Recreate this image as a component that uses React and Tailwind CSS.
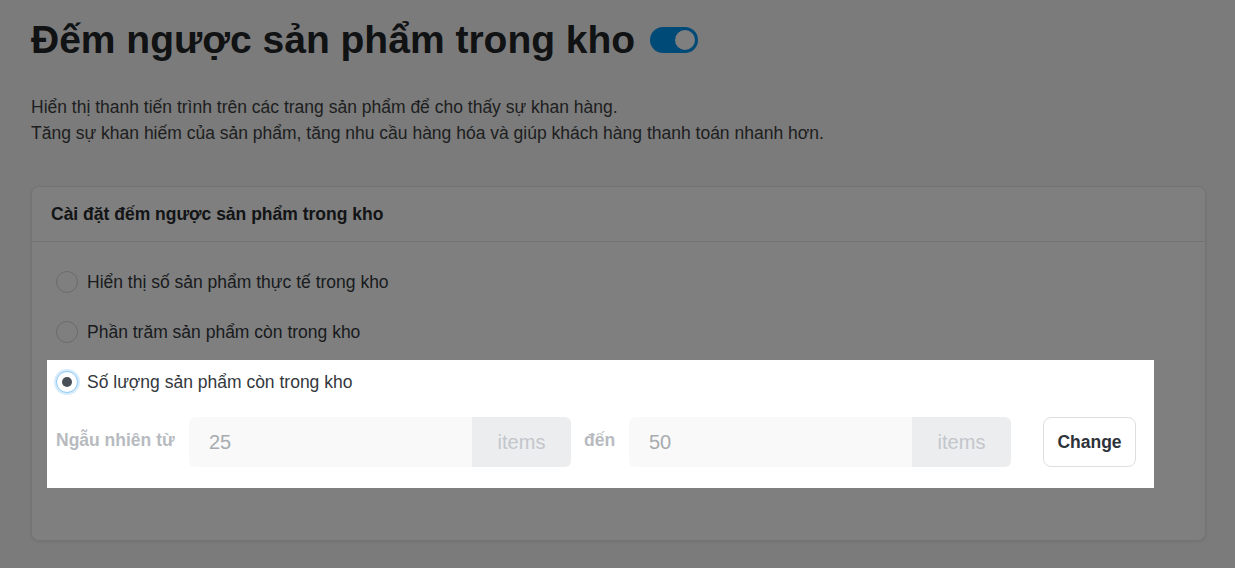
const Radio = ({ checked }) => (
  <span
    className={
      checked
        ? "flex h-[22px] w-[22px] shrink-0 items-center justify-center rounded-full border border-[#8ec9f5] bg-white shadow-[0_0_0_2px_#d6ecfc]"
        : "h-[22px] w-[22px] shrink-0 rounded-full border border-[#d2d5d8] bg-white"
    }
  >
    {checked && <span className="h-[10px] w-[10px] rounded-full bg-[#4a5058]" />}
  </span>
);

const ItemsInput = ({ value }) => (
  <div className="flex h-[50px] w-[382px] overflow-hidden rounded-[6px]">
    <div className="flex flex-1 items-center bg-[#f9f9fa] pl-[20px] text-[20px] text-[#a7abaf]">
      {value}
    </div>
    <div className="flex w-[99px] items-center justify-center bg-[#ecedef] text-[20px] text-[#c3c6ca]">
      items
    </div>
  </div>
);

const App = () => {
  return (
    <div className="min-h-screen bg-[#f6f6f6] px-[31px] pt-[16px] pb-[28px] font-['Liberation_Sans',Arial,sans-serif]">
      <div className="flex items-center gap-[15px]">
        <h1 className="text-[39px] font-bold leading-[48px] text-[#222426]">
          Đếm ngược sản phẩm trong kho
        </h1>
        <div className="flex h-[26px] w-[48px] items-center justify-end rounded-full bg-[#0094f0] pr-[3px]">
          <span className="h-[20px] w-[20px] rounded-full bg-white" />
        </div>
      </div>

      <p className="mt-[30px] text-[17.5px] leading-[26px] text-[#3d3f41]">
        Hiển thị thanh tiến trình trên các trang sản phẩm để cho thấy sự khan hàng.
        <br />
        Tăng sự khan hiếm của sản phẩm, tăng nhu cầu hàng hóa và giúp khách hàng thanh toán nhanh hơn.
      </p>

      <div className="mt-[40px] w-[1175px] rounded-[8px] border border-[#e6e6e6] bg-white shadow-[0_1px_3px_rgba(0,0,0,0.08)]">
        <div className="flex h-[55px] items-center border-b border-[#e6e6e6] px-[19px] text-[17.5px] font-bold text-[#26292c]">
          Cài đặt đếm ngược sản phẩm trong kho
        </div>

        <div className="flex flex-col pt-[29px] pb-[52px] pl-[15px] pr-[51px]">
          <label className="flex h-[22px] items-center gap-[9px] pl-[9px] text-[17.5px] text-[#33383d]">
            <Radio />
            Hiển thị số sản phẩm thực tế trong kho
          </label>
          <label className="mt-[28px] flex h-[22px] items-center gap-[9px] pl-[9px] text-[17.5px] text-[#33383d]">
            <Radio />
            Phần trăm sản phẩm còn trong kho
          </label>

          <div className="relative z-10 mt-[17px] bg-white pt-[11px] pb-[21px] pl-[9px] pr-[18px] shadow-[0_0_0_9999px_rgba(0,0,0,0.5)]">
            <label className="flex h-[22px] items-center gap-[9px] text-[17.5px] text-[#33383d]">
              <Radio checked />
              Số lượng sản phẩm còn trong kho
            </label>
            <div className="mt-[24px] flex items-center">
              <span className="w-[133px] pb-[4px] text-[17.5px] font-bold text-[#b7bbbf]">
                Ngẫu nhiên từ
              </span>
              <ItemsInput value="25" />
              <span className="w-[58px] pb-[4px] pl-[13px] text-[17.5px] font-bold text-[#b7bbbf]">
                đến
              </span>
              <ItemsInput value="50" />
              <button className="ml-[32px] h-[50px] w-[93px] rounded-[8px] border border-[#dcdee0] bg-white text-[17.5px] font-bold text-[#2d3339]">
                Change
              </button>
            </div>
          </div>
        </div>
      </div>
    </div>
  );
};

export default App;
